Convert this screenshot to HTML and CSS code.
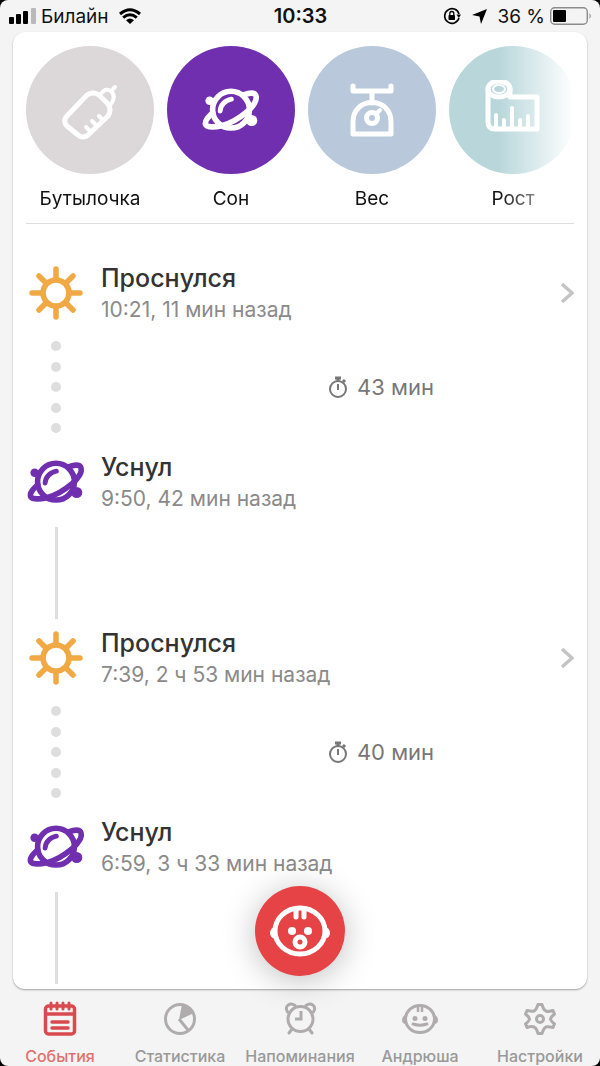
FILE: index.html
```html
<!DOCTYPE html>
<html lang="ru">
<head>
<meta charset="utf-8">
<meta name="viewport" content="width=device-width, initial-scale=1">
<title>События</title>
<link rel="stylesheet" href="styles.css">
</head>
<body>
<svg class="sprite" aria-hidden="true">
  <symbol id="planet" viewBox="0 0 180 140">
    <g fill="none" stroke="currentColor" stroke-width="17" stroke-linecap="round" stroke-linejoin="round">
      <circle cx="90" cy="69" r="56"/>
      <path d="M128 24C144 18 160 16 165 24C172 38 158 60 138 76C112 98 86 112 62 118C40 123 18 123 13 115C8 104 22 90 34 78"/>
      <path d="M57 73C58 55 72 40 91 37" stroke-width="15"/>
    </g>
    <circle cx="25" cy="42" r="13" fill="currentColor"/>
    <circle cx="153" cy="102" r="17" fill="currentColor"/>
  </symbol>
  <symbol id="sun" viewBox="0 0 54 54">
    <g fill="none" stroke="currentColor" stroke-width="5.500" stroke-linecap="round">
      <circle cx="27" cy="27" r="13"/>
      <path d="M27 3v9M27 42v9M3 27h9M42 27h9M10 10l6 6M38 38l6 6M44 10l-6 6M16 38l-6 6"/>
    </g>
  </symbol>
  <symbol id="stopwatch" viewBox="0 0 20 24">
    <g fill="none" stroke="currentColor" stroke-width="2">
      <circle cx="10" cy="14" r="8"/>
      <path d="M10 9v6" />
      <path d="M15 7l2-2" stroke-width="3"/>
      <path d="M7 3h6M10 3v4" stroke-width="3"/>
    </g>
  </symbol>
  <symbol id="chevron" viewBox="0 0 14 22">
    <path d="M2 2l10 9-10 9" fill="none" stroke="currentColor" stroke-width="3.500"/>
  </symbol>
</svg>

<header class="status">
  <div class="status-side">
    <svg class="signal" viewBox="0 0 27 16" aria-hidden="true">
      <rect x="0" y="9" width="5" height="7" rx="1"/>
      <rect x="7" y="6" width="5" height="10" rx="1"/>
      <rect x="14" y="3" width="5" height="13" rx="1"/>
      <rect x="22" y="0" width="5" height="16" rx="1" fill="#b9b9b9"/>
    </svg>
    <span>Билайн</span>
    <svg class="wifi" viewBox="0 0 22 16" aria-hidden="true">
      <path d="M11 16L7 12.200Q11 9 15 12.200Z"/>
      <path d="M4.200 9.600Q11 3.800 17.800 9.600M1 6Q11-2.500 21 6" fill="none" stroke="#000" stroke-width="3"/>
    </svg>
  </div>
  <time class="clock">10:33</time>
  <div class="status-side status-right">
    <svg class="lock" viewBox="0 0 18 18" aria-hidden="true">
      <path d="M16 11A7.300 7.300 0 1 1 16 7" fill="none" stroke="#000" stroke-width="1.600"/>
      <path d="M13.500 7.500h4.500l-2.200 3.500z"/>
      <rect x="5.500" y="8" width="6.500" height="5" rx="0.800"/>
      <path d="M6.800 8V6.500a2 2 0 0 1 4 0V8" fill="none" stroke="#000" stroke-width="1.300"/>
    </svg>
    <svg class="arrow" viewBox="0 0 15 15" aria-hidden="true"><path d="M15 0L9 15 7.500 7.500 0 6Z"/></svg>
    <span>36 %</span>
    <svg class="battery" viewBox="0 0 42 18" aria-hidden="true">
      <rect x="0.700" y="0.700" width="36.600" height="16.600" rx="4" fill="none" stroke="#8b8b8b" stroke-width="1.400"/>
      <rect x="3" y="3" width="13" height="12" rx="1"/>
      <path d="M39.500 6q2.500 3 0 6z" fill="#8b8b8b"/>
    </svg>
  </div>
</header>

<main class="card">
  <nav class="kinds" aria-label="Добавить событие">
    <button class="kind" type="button">
      <span class="disc disc-bottle">
        <svg class="glyph" viewBox="0 0 60 60" aria-hidden="true">
          <g fill="none" stroke="#fff" stroke-width="5" stroke-linecap="round" stroke-linejoin="round">
            <path d="M6 37L27 15Q33 11 39 15L48 24Q52 30 48 36L28 55Q23 59 18 55L7 46Q3 42 6 37Z"/>
            <path d="M43 40l-4-4M37 46l-5-5M31 52l-5-5" stroke-width="4"/>
            <path d="M40 15Q45 7 51 11Q57 17 50 25M53 9l2-2" stroke-width="4"/>
          </g>
        </svg>
      </span>
      <span>Бутылочка</span>
    </button>
    <button class="kind" type="button">
      <span class="disc disc-sleep"><svg class="planet" aria-hidden="true"><use href="#planet"/></svg></span>
      <span>Сон</span>
    </button>
    <button class="kind" type="button">
      <span class="disc disc-weight">
        <svg class="glyph" viewBox="0 0 60 60" aria-hidden="true">
          <g fill="none" stroke="#fff" stroke-width="5" stroke-linecap="round" stroke-linejoin="round">
            <path d="M11 6V11H49V6M30 11V23"/>
            <path d="M11 54V42C11 16 49 16 49 42V54Z"/>
            <circle cx="30" cy="38" r="5.500"/>
            <path d="M34 34l4-4" stroke-width="4"/>
          </g>
        </svg>
      </span>
      <span>Вес</span>
    </button>
    <button class="kind" type="button">
      <span class="disc disc-height">
        <svg class="glyph" viewBox="0 0 60 60" aria-hidden="true">
          <g fill="none" stroke="#fff" stroke-width="5" stroke-linecap="round" stroke-linejoin="round">
            <ellipse cx="16" cy="9" rx="11" ry="8"/>
            <ellipse cx="16" cy="9" rx="6" ry="4" stroke-width="2"/>
            <path d="M5 9V42Q5 49 12 49H54V17H27V9"/>
            <path d="M13 35V47M21 40V47M29 28V47M37 40V47M45 36V47" stroke-width="4"/>
          </g>
        </svg>
      </span>
      <span>Рост</span>
    </button>
  </nav>

  <ol class="timeline">
    <li>
      <a class="event" href="#wake-1">
        <span class="event-icon wake"><svg class="sun" aria-hidden="true"><use href="#sun"/></svg></span>
        <span class="event-text"><strong>Проснулся</strong><small>10:21, 11 мин назад</small></span>
        <svg class="chevron" aria-hidden="true"><use href="#chevron"/></svg>
      </a>
      <div class="span span-sleep">
        <span class="dots" aria-hidden="true"><i></i><i></i><i></i><i></i><i></i></span>
        <span class="duration"><svg class="stopwatch" aria-hidden="true"><use href="#stopwatch"/></svg>43 мин</span>
      </div>
    </li>
    <li>
      <div class="event">
        <span class="event-icon sleep"><svg class="planet" aria-hidden="true"><use href="#planet"/></svg></span>
        <span class="event-text"><strong>Уснул</strong><small>9:50, 42 мин назад</small></span>
      </div>
      <div class="span span-awake"><span class="line"></span></div>
    </li>
    <li>
      <a class="event" href="#wake-2">
        <span class="event-icon wake"><svg class="sun" aria-hidden="true"><use href="#sun"/></svg></span>
        <span class="event-text"><strong>Проснулся</strong><small>7:39, 2 ч 53 мин назад</small></span>
        <svg class="chevron" aria-hidden="true"><use href="#chevron"/></svg>
      </a>
      <div class="span span-sleep">
        <span class="dots" aria-hidden="true"><i></i><i></i><i></i><i></i><i></i></span>
        <span class="duration"><svg class="stopwatch" aria-hidden="true"><use href="#stopwatch"/></svg>40 мин</span>
      </div>
    </li>
    <li>
      <div class="event">
        <span class="event-icon sleep"><svg class="planet" aria-hidden="true"><use href="#planet"/></svg></span>
        <span class="event-text"><strong>Уснул</strong><small>6:59, 3 ч 33 мин назад</small></span>
      </div>
      <div class="span span-last"><span class="line"></span></div>
    </li>
  </ol>

  <button class="fab" type="button" aria-label="Малыш">
    <svg class="fab-icon" viewBox="0 0 62 52" aria-hidden="true">
      <g fill="none" stroke="#fff" stroke-width="5">
        <ellipse cx="31" cy="26" rx="25" ry="23"/>
        <path d="M27 4v8M35 4v8" stroke-linecap="round"/>
        <circle cx="31" cy="37" r="5"/>
      </g>
      <g fill="#fff">
        <path d="M7 21Q1 23 1 28T7 34ZM55 21Q61 23 61 28T55 34Z"/>
        <circle cx="23" cy="26" r="4"/><circle cx="39" cy="26" r="4"/>
      </g>
    </svg>
  </button>
</main>

<nav class="tabs" aria-label="Разделы">
  <a class="tab tab-active" href="#events" aria-current="page">
    <svg class="tab-icon" viewBox="0 0 36 36" aria-hidden="true">
      <g fill="none" stroke="currentColor" stroke-width="3.500" stroke-linecap="round">
        <rect x="3.500" y="5" width="29" height="28" rx="3"/>
        <path d="M4 13h28M10 21h16M10 27h16"/>
        <path d="M9 2v6M15 2v6M21 2v6M27 2v6" stroke-width="3"/>
      </g>
    </svg>
    <span>События</span>
  </a>
  <a class="tab" href="#stats">
    <svg class="tab-icon" viewBox="0 0 36 36" aria-hidden="true">
      <circle cx="18" cy="18" r="14.500" fill="none" stroke="currentColor" stroke-width="3"/>
      <path d="M17 19L20 3Q28 5 32 12Z" fill="currentColor"/>
      <path d="M17 18l9 11" stroke="currentColor" stroke-width="3"/>
    </svg>
    <span>Статистика</span>
  </a>
  <a class="tab" href="#reminders">
    <svg class="tab-icon" viewBox="0 0 36 36" aria-hidden="true">
      <g fill="none" stroke="currentColor" stroke-width="3" stroke-linecap="round">
        <circle cx="18.500" cy="18" r="12.500"/>
        <path d="M5.500 11C2 5 8 1 13 4.500M31.500 11C35 5 29 1 24 4.500M10 28l-3 4M27 28l3 4"/>
        <path d="M19 10v8h-6" stroke-linecap="butt"/>
      </g>
    </svg>
    <span>Напоминания</span>
  </a>
  <a class="tab" href="#child">
    <svg class="tab-icon" viewBox="0 0 36 36" aria-hidden="true">
      <g fill="none" stroke="currentColor" stroke-width="3">
        <ellipse cx="18" cy="18" rx="14.500" ry="13.500"/>
        <path d="M16 5v6M20 5v6" stroke-width="2.500"/>
        <path d="M11 23Q18 25.500 25 23" stroke-linecap="round"/>
      </g>
      <g fill="currentColor">
        <path d="M4 14Q0 15 0 19T4 23ZM32 14Q36 15 36 19T32 23Z"/>
        <circle cx="13" cy="17.500" r="2.500"/><circle cx="23" cy="17.500" r="2.500"/>
      </g>
    </svg>
    <span>Андрюша</span>
  </a>
  <a class="tab" href="#settings">
    <svg class="tab-icon" viewBox="0 0 36 36" aria-hidden="true">
      <g fill="none" stroke="currentColor" stroke-width="3" stroke-linejoin="round">
        <path d="M16 3.500h4Q21.500 9 24 10T31 9.500L32.500 13Q28.500 16.500 28.500 18T32.500 23L31 26.500Q26 25.500 24 26T20 32.500H16Q14.500 27 12 26T5 26.500L3.500 23Q7.500 19.500 7.500 18T3.500 13L5 9.500Q10 10.500 12 10T16 3.500Z"/>
        <circle cx="18" cy="18" r="3.500"/>
      </g>
    </svg>
    <span>Настройки</span>
  </a>
</nav>
</body>
</html>
```
FILE: styles.css
```css
* {
  box-sizing: border-box;
}

html {
  background: #000;
}

body {
  display: flex;
  flex-direction: column;
  min-height: 100vh;
  margin: 0;
  border-radius: 8px;
  background: #f4f4f4;
  color: #111;
  font-family: Inter, "Noto Sans", sans-serif;
}

button {
  padding: 0;
  border: 0;
  background: none;
  color: inherit;
  font: inherit;
  cursor: pointer;
}

a {
  color: inherit;
  text-decoration: none;
}

svg {
  display: block;
  flex: none;
}

.sprite {
  position: absolute;
  width: 0;
  height: 0;
}

/* Status bar */
.status {
  display: grid;
  grid-template-columns: 1fr auto 1fr;
  align-items: center;
  height: 32px;
  padding: 0 8px 0 9px;
  font-size: 19px;
  color: #111;
}

.status-side {
  display: flex;
  align-items: center;
  gap: 5px;
}

.status-right {
  justify-content: flex-end;
}

.clock {
  font-size: 20px;
  font-weight: 600;
}

.signal {
  width: 27px;
  height: 16px;
}

.wifi {
  width: 22px;
  height: 16px;
  margin-left: 5px;
}

.lock {
  width: 18px;
  height: 18px;
}

.arrow {
  width: 15px;
  height: 15px;
  margin: 0 5px 0 6px;
}

.battery {
  width: 42px;
  height: 18px;
}

/* Card */
.card {
  position: relative;
  flex: 1;
  margin: 0 13px;
  padding: 14px 13px 5px;
  border-radius: 12px;
  background: #fff;
  box-shadow: 0 1px 2px rgba(0, 0, 0, 0.35);
}

.kinds {
  display: flex;
  gap: 13px;
  overflow: hidden;
  padding-bottom: 12px;
  -webkit-mask-image: linear-gradient(to right, #000 calc(100% - 75px), transparent);
  mask-image: linear-gradient(to right, #000 calc(100% - 75px), transparent);
}

.kind {
  display: flex;
  flex: none;
  flex-direction: column;
  align-items: center;
  gap: 13px;
  font-size: 19px;
  line-height: 24px;
}

.disc {
  display: grid;
  place-items: center;
  width: 128px;
  height: 128px;
  border-radius: 50%;
  color: #fff;
}

.disc-bottle {
  background: #dcd8da;
}

.disc-sleep {
  background: #702fae;
}

.disc-weight {
  background: #b9c9db;
}

.disc-height {
  background: #b9d7db;
}

.glyph {
  width: 60px;
  height: 60px;
}

.planet {
  width: 60px;
  height: 46px;
}

/* Timeline */
.timeline {
  margin: 0;
  padding: 39px 0 0;
  border-top: 1px solid #dedede;
  list-style: none;
}

.event {
  display: flex;
  align-items: center;
  height: 60px;
}

.event-icon {
  display: grid;
  flex: none;
  place-items: center;
  width: 60px;
}

.wake {
  color: #f0a944;
}

.sleep {
  color: #702fae;
}

.sun {
  width: 54px;
  height: 54px;
}

.event-text {
  display: flex;
  flex: 1;
  flex-direction: column;
  padding-top: 1px;
  padding-left: 15px;
}

.event-text strong {
  color: #333;
  font-size: 25px;
  font-weight: 500;
  line-height: 32px;
}

.event-text small {
  color: #8a8a8a;
  font-size: 21px;
  line-height: 32px;
}

.chevron {
  width: 14px;
  height: 22px;
  color: #c4c4c4;
}

.span {
  display: flex;
}

.span-sleep {
  padding: 18px 0 19px;
}

.span-awake {
  padding: 15px 0 9px;
}

.span-last {
  padding-top: 15px;
}

.dots {
  display: flex;
  flex: none;
  flex-direction: column;
  align-items: center;
  justify-content: space-between;
  width: 60px;
  height: 92px;
}

.dots i {
  width: 10px;
  height: 10px;
  border-radius: 50%;
  background: #dedede;
}

.duration {
  display: flex;
  flex: 1;
  align-items: center;
  justify-content: center;
  gap: 9px;
  padding-left: 102px;
  color: #777;
  font-size: 22px;
}

.stopwatch {
  width: 20px;
  height: 24px;
}

.line {
  width: 3px;
  height: 92px;
  margin-left: 29px;
  background: #dedede;
}

.fab {
  position: absolute;
  bottom: 13px;
  left: 50%;
  display: grid;
  place-items: center;
  width: 90px;
  height: 90px;
  margin-left: -45px;
  border-radius: 50%;
  background: #e64346;
  box-shadow: 0 4px 32px rgba(0, 0, 0, 0.25);
}

.fab-icon {
  width: 62px;
  height: 52px;
}

/* Tab bar */
.tabs {
  display: grid;
  grid-template-columns: repeat(5, 1fr);
  height: 77px;
  padding-top: 12px;
}

.tab {
  display: flex;
  flex-direction: column;
  align-items: center;
  gap: 9px;
  color: #b0acad;
  font-size: 16px;
  font-weight: 500;
  line-height: 20px;
}

.tab span {
  color: #999;
}

.tab-active {
  color: #d84a50;
}

.tab-active span {
  color: #e2716c;
}

.tab-icon {
  width: 36px;
  height: 36px;
}
```
